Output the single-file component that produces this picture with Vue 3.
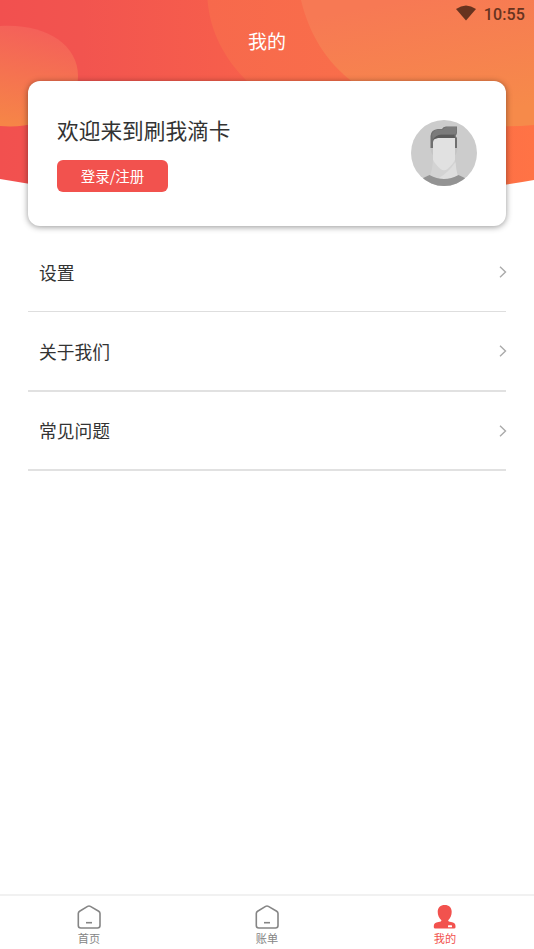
<script setup>
const menu = ['设置', '关于我们', '常见问题']
const tabs = [
  { label: '首页', icon: 'house' },
  { label: '账单', icon: 'house' },
  { label: '我的', icon: 'person', active: true },
]
</script>

<template>
  <div class="screen">
    <svg class="backdrop" viewBox="0 0 534 200" aria-hidden="true">
      <defs>
        <linearGradient id="base" x1="0" x2="1" y1="0" y2="0">
          <stop offset="0" stop-color="#f2504f" />
          <stop offset=".15" stop-color="#f2544f" />
          <stop offset="1" stop-color="#ff7345" />
        </linearGradient>
        <linearGradient id="leftBlob" x1="0.4" y1="0" x2="0.25" y2="1">
          <stop offset="0" stop-color="#f4605a" />
          <stop offset="1" stop-color="#f68547" />
        </linearGradient>
        <linearGradient id="rightBlob" gradientUnits="userSpaceOnUse" x1="400" y1="0" x2="425" y2="126">
          <stop offset="0" stop-color="#f77954" />
          <stop offset="1" stop-color="#f68a4a" />
        </linearGradient>
        <linearGradient id="midBlob" x1="0" y1="0" x2="1" y2="0">
          <stop offset="0" stop-color="#f7694c" />
          <stop offset="1" stop-color="#fa704a" />
        </linearGradient>
      </defs>
      <path fill="url(#base)" d="M0 0H534V180Q267 227 0 179Z" />
      <path fill="url(#midBlob)" d="M207.500 0C210 32 225 60 248 82L300 120H420V0Z" />
      <path fill="url(#rightBlob)" d="M301 0C309 33 325 61 354 83C400 119 460 131 534 125V0Z" />
      <path fill="url(#leftBlob)" d="M0 26C43 23 78 43 78 76C78 108 43 130 0 126Z" />
    </svg>

    <div class="status">
      <svg width="20" height="16" viewBox="0 0 20 16"><path fill="#67331f" d="M0 4Q10-3 20 4L10 15.500Z" /></svg>
      <span>10:55</span>
    </div>
    <h1>我的</h1>

    <section class="card">
      <div class="welcome">
        <h2>欢迎来到刷我滴卡</h2>
        <button>登录/注册</button>
      </div>
      <svg class="avatar" viewBox="0 0 66 66">
        <clipPath id="round"><circle cx="33" cy="33" r="33" /></clipPath>
        <g clip-path="url(#round)">
          <path fill="#ccc" d="M0 0H66V66H0Z" />
          <path fill="#d3d3d3" d="M22 41Q21.500 50 18.500 57Q32 63 47.500 57Q44.500 50 44 41Z" />
          <path fill="#dedede" d="M44.500 42Q45 50 47 57Q39 61 28 58Q38 52 44.500 42Z" />
          <path fill="#c5c5c5" d="M19.500 28H22V35Q20 34 19.500 28ZM44 28H46.500Q46 34 44 35Z" />
          <path fill="#e1e1e1" d="M22 18H44V40Q42 44 36.500 49Q33 51.500 29.500 49Q24 44 22 40Z" />
          <path fill="#6f6f6f" d="M19.500 28V16Q20 9.500 27 9H31Q32 6.500 35 6.500H46V13Q45.500 15 44.500 16L46 18V28H44V18H27Q22 18.500 22 22V28Z" />
          <path fill="#5b5b5b" d="M22 21Q23 15 30 14.500H43L44 18H27Q22 18.500 22 22Z" />
          <path fill="#7b7b7b" d="M21 15Q22 10 27 9.500H32Q33 7 36 7H45.500V13Q44 15 40 14.500H30Q25 15 22 19Z" />
          <path fill="#939393" d="M10 59L18.500 55Q33 63 47.500 55L56 59V67H10Z" />
        </g>
      </svg>
    </section>

    <ul class="menu">
      <li v-for="item in menu" :key="item">
        <span>{{ item }}</span>
        <svg width="8" height="12" viewBox="0 0 8 12"><path d="M1 .8L6.500 6L1 11.200" fill="none" stroke="#aaa" stroke-width="1.400" /></svg>
      </li>
    </ul>

    <nav>
      <a v-for="tab in tabs" :key="tab.label" :class="{ active: tab.active }">
        <svg v-if="tab.icon === 'house'" width="24" height="24" viewBox="0 0 24 24" fill="none" stroke="#858585" stroke-width="1.600">
          <path d="M1.300 8.500Q1.300 7 2.600 6.200L10.600 1.400Q12 .6 13.400 1.400L21.700 6.200Q23 7 23 8.500V20.500Q23 23 20.500 23H3.800Q1.300 23 1.300 20.500Z" />
          <path d="M9 17.700H15" />
        </svg>
        <svg v-else width="24" height="24" viewBox="0 0 24 24">
          <path fill="#f2524e" d="M11.700 0C7.500 0 4.700 2.500 4.700 6.800C4.700 10.300 6 13.300 8.400 15.200C8.400 16.300 7.500 16.700 5.500 17C2.300 17.500.8 18.700.8 21V22.200Q.8 23.500 2.200 23.500H21Q22.500 23.500 22.500 22.200V21C22.500 18.700 21 17.500 18 17C16 16.700 15.200 16.300 15.200 15.200C17.500 13.300 18.700 10.300 18.700 6.800C18.700 2.500 16 0 11.700 0Z" />
          <rect x="15" y="20.300" width="4" height="1.900" rx=".5" fill="#fff" />
        </svg>
        <span>{{ tab.label }}</span>
      </a>
    </nav>
  </div>
</template>

<style>
body { margin: 0; background: #fff; }
</style>

<style scoped>
.screen {
  position: relative;
  display: flex;
  flex-direction: column;
  box-sizing: border-box;
  width: 534px;
  height: 949px;
  overflow: hidden;
  font-family: "Noto Sans CJK SC", sans-serif;
  color: #333;
}
.backdrop { position: absolute; top: 0; left: 0; width: 534px; height: 200px; }
.status {
  position: relative;
  display: flex;
  justify-content: flex-end;
  align-items: flex-start;
  gap: 8px;
  height: 27px;
  padding: 5px 9px 0 0;
  box-sizing: border-box;
  color: #67331f;
  font: 500 16px/19px Roboto, sans-serif;
  letter-spacing: 0.15px;
}
h1 {
  position: relative;
  margin: 0;
  height: 54px;
  text-align: center;
  color: #fff;
  font-size: 19px;
  font-weight: 400;
  line-height: 27px;
}
.card {
  position: relative;
  display: flex;
  justify-content: space-between;
  align-items: center;
  box-sizing: border-box;
  flex: none;
  height: 145px;
  margin: 0 28px;
  padding: 0 29px;
  background: #fff;
  border-radius: 12px;
  box-shadow: 0 1px 6px rgba(0, 0, 0, 0.42);
}
.welcome { display: flex; flex-direction: column; align-items: flex-start; gap: 14px; }
h2 { margin: 0; font-size: 21.700px; line-height: 32px; font-weight: 400; }
button {
  width: 111px;
  height: 32px;
  margin-bottom: 1px;
  padding: 0;
  border: 0;
  border-radius: 6px;
  background: #f2524e;
  color: #fff;
  font: 400 14.500px/32px "Noto Sans CJK SC", sans-serif;
}
.avatar { width: 66px; height: 66px; margin-bottom: 1px; }
.menu { list-style: none; margin: 7px 28px 0; padding: 0; }
.menu li {
  display: flex;
  justify-content: space-between;
  align-items: center;
  box-sizing: border-box;
  height: 79px;
  padding-left: 11px;
  border-bottom: 1px solid #dedede;
  font-size: 17.800px;
}
.menu li + li { border-bottom-width: 2px; border-bottom-color: #e1e1e1; }
.menu li:nth-child(2) { height: 80px; }
.menu li:nth-child(3) span { margin-top: -1px; }
.menu svg { margin-right: -1px; }
nav {
  display: flex;
  box-sizing: border-box;
  height: 55px;
  margin-top: auto;
  border-top: 2px solid #f1f1f1;
  background: #fff;
}
nav a {
  display: flex;
  flex: 1;
  flex-direction: column;
  align-items: center;
  padding-top: 9px;
  color: #858585;
  font-size: 11.200px;
  line-height: 18px;
}
nav a.active { color: #f2524e; }
nav svg { display: block; }
</style>
